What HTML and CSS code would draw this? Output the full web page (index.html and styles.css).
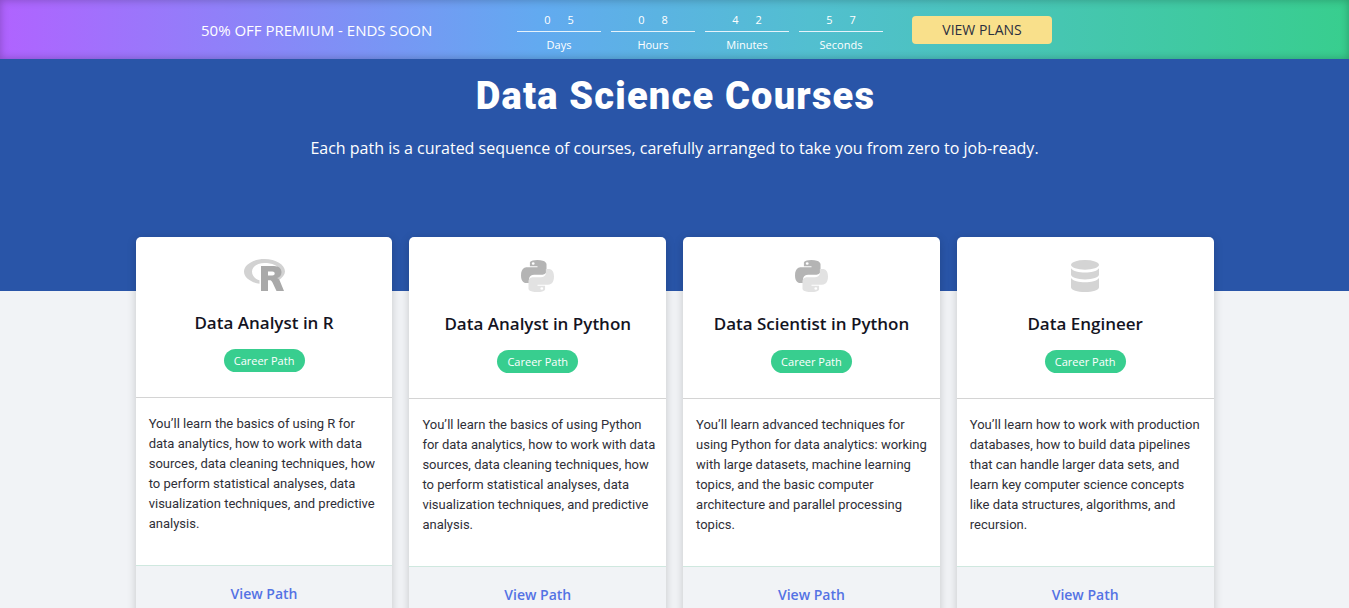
FILE: index.html
```html
<!DOCTYPE html>
<html>
<head>
  <title>Data Science Courses</title>
  <link rel="stylesheet" href="styles.css">
</head>
<body>
  <div class="promo">
    <p class="promo-text">50% OFF PREMIUM - ENDS SOON</p>
    <div class="countdown">
      <div class="unit"><div class="digits"><span>0</span><span>5</span></div><div class="label">Days</div></div>
      <div class="unit"><div class="digits"><span>0</span><span>8</span></div><div class="label">Hours</div></div>
      <div class="unit"><div class="digits"><span>4</span><span>2</span></div><div class="label">Minutes</div></div>
      <div class="unit"><div class="digits"><span>5</span><span>7</span></div><div class="label">Seconds</div></div>
    </div>
    <a class="plans-btn" href="#">VIEW PLANS</a>
  </div>

  <div class="hero">
    <h1>Data Science Courses</h1>
    <p>Each path is a curated sequence of courses, carefully arranged to take you from zero to job-ready.</p>
  </div>

  <div class="courses">
    <div class="card">
      <div class="card-top">
        <svg class="icon icon-r" viewBox="0 0 41 32">
          <path fill="#d2d2d2" fill-rule="evenodd" d="M20.500 0C9.200 0 0 5.600 0 12.600c0 6 6.600 10.900 15.500 12.200v-3.600c-4.500-1.200-7.500-4.400-7.500-8.600 0-4.900 5.500-8.600 12.500-8.600s15 2.400 15 8c0 2.400-1.100 4.300-3.200 5.800l2.200 3.800C38.500 18.600 41 15.800 41 12.600 41 5.600 31.800 0 20.500 0z"/>
          <path fill="#a9a9a9" fill-rule="evenodd" d="M17 7h13c5 0 7.500 2.800 7.500 6.300 0 2.900-1.700 4.900-4.300 5.700 1.200.6 1.900 1.500 2.600 2.700L40 32h-7.500l-4-8.600c-.8-1.500-1.600-2.100-3-2.100H24V32h-7V7zm7 5.500v4h4.300c1.500 0 2.400-.8 2.400-2s-.9-2-2.400-2H24z"/>
        </svg>
        <h2>Data Analyst in R</h2>
        <span class="badge">Career Path</span>
      </div>
      <p class="card-text">You’ll learn the basics of using R for data analytics, how to work with data sources, data cleaning techniques, how to perform statistical analyses, data visualization techniques, and predictive analysis.</p>
      <div class="card-foot"><a href="#">View Path</a></div>
    </div>

    <div class="card">
      <div class="card-top">
        <svg class="icon" viewBox="1 0 30 33" preserveAspectRatio="none">
          <path fill="#b4b4b4" fill-rule="evenodd" d="M15.900 0C8.600 0 9.100 3.200 9.100 3.200v3.300h6.900v1H6.400S1 6.900 1 15.900c0 8.100 4.600 7.800 4.600 7.800h2.800v-3.800s-.2-4.600 4.500-4.600h6.900s4.400.1 4.400-4.200V4.400S24.400 0 15.900 0zm-3.800 2.200a1.300 1.300 0 1 1 0 2.600 1.300 1.300 0 0 1 0-2.600z"/>
          <path fill="#e2e2e2" fill-rule="evenodd" d="M16.100 33c7.300 0 6.800-3.200 6.800-3.200v-3.300H16v-1h9.600s5.400.6 5.400-8.400c0-8.100-4.600-7.800-4.600-7.800h-2.800v3.800s.2 4.600-4.500 4.600h-6.900s-4.400-.1-4.400 4.200v7.700S7.600 33 16.100 33zm3.800-2.200a1.300 1.300 0 1 1 0-2.600 1.300 1.300 0 0 1 0 2.600z"/>
        </svg>
        <h2>Data Analyst in Python</h2>
        <span class="badge">Career Path</span>
      </div>
      <p class="card-text">You’ll learn the basics of using Python for data analytics, how to work with data sources, data cleaning techniques, how to perform statistical analyses, data visualization techniques, and predictive analysis.</p>
      <div class="card-foot"><a href="#">View Path</a></div>
    </div>

    <div class="card">
      <div class="card-top">
        <svg class="icon" viewBox="1 0 30 33" preserveAspectRatio="none">
          <path fill="#b4b4b4" fill-rule="evenodd" d="M15.900 0C8.600 0 9.100 3.200 9.100 3.200v3.300h6.900v1H6.400S1 6.900 1 15.900c0 8.100 4.600 7.800 4.600 7.800h2.800v-3.800s-.2-4.600 4.500-4.600h6.900s4.400.1 4.400-4.200V4.400S24.400 0 15.900 0zm-3.800 2.200a1.300 1.300 0 1 1 0 2.600 1.300 1.300 0 0 1 0-2.600z"/>
          <path fill="#e2e2e2" fill-rule="evenodd" d="M16.100 33c7.300 0 6.800-3.200 6.800-3.200v-3.300H16v-1h9.600s5.400.6 5.400-8.400c0-8.100-4.600-7.800-4.600-7.800h-2.800v3.800s.2 4.600-4.500 4.600h-6.900s-4.400-.1-4.400 4.200v7.700S7.600 33 16.100 33zm3.800-2.200a1.300 1.300 0 1 1 0-2.600 1.300 1.300 0 0 1 0 2.600z"/>
        </svg>
        <h2>Data Scientist in Python</h2>
        <span class="badge">Career Path</span>
      </div>
      <p class="card-text">You’ll learn advanced techniques for using Python for data analytics: working with large datasets, machine learning topics, and the basic computer architecture and parallel processing topics.</p>
      <div class="card-foot"><a href="#">View Path</a></div>
    </div>

    <div class="card">
      <div class="card-top">
        <svg class="icon icon-db" viewBox="2 0 28 33" preserveAspectRatio="none">
          <ellipse fill="#d4d4d4" cx="16" cy="5" rx="14" ry="5"/>
          <path fill="#d4d4d4" d="M2 8.500C4 11.500 10 13 16 13s12-1.500 14-4.500V15c0 2.800-6.300 5-14 5S2 17.800 2 15zM2 18.500C4 21.500 10 23 16 23s12-1.500 14-4.500V28c0 2.800-6.300 5-14 5S2 30.800 2 28z"/>
        </svg>
        <h2>Data Engineer</h2>
        <span class="badge">Career Path</span>
      </div>
      <p class="card-text">You’ll learn how to work with production databases, how to build data pipelines that can handle larger data sets, and learn key computer science concepts like data structures, algorithms, and recursion.</p>
      <div class="card-foot"><a href="#">View Path</a></div>
    </div>
  </div>
</body>
</html>
```

FILE: styles.css
```css
html, body {
  height: 608px;
  overflow: hidden;
}

* {
  box-sizing: border-box;
}

body {
  margin: 0;
  font-family: "Open Sans", sans-serif;
  background-color: #f1f3f6;
}

.promo {
  display: flex;
  align-items: center;
  height: 59px;
  padding-left: 201px;
  color: #ffffff;
  background: linear-gradient(90deg, #b063ff 0%, #62aaf0 40%, #52bfd0 60%, #38ce8e 100%);
  box-shadow: inset 0 0 8px rgba(0, 0, 0, 0.25);
}

.promo-text {
  width: 316px;
  margin: 0;
  font-size: 15px;
}

.countdown {
  display: flex;
  gap: 10px;
}

.unit {
  width: 84px;
  text-align: center;
}

.digits {
  display: flex;
  justify-content: center;
  gap: 17px;
  height: 25px;
  padding-top: 5px;
  font-size: 11px;
  line-height: 15px;
  border-bottom: 1px solid #e6f3fb;
}

.label {
  margin-top: 5px;
  font-size: 11px;
  line-height: 15px;
}

.plans-btn {
  display: block;
  width: 140px;
  height: 28px;
  margin-left: 29px;
  font-size: 14px;
  font-weight: 500;
  line-height: 28px;
  text-align: center;
  text-decoration: none;
  color: #2b2f3f;
  background-color: #f9e08b;
  border-radius: 4px;
}

.hero {
  height: 232px;
  text-align: center;
  color: #ffffff;
  background-color: #2955a8;
}

.hero h1 {
  margin: 0;
  padding: 14px 0 0 2px;
  font-family: "Roboto", sans-serif;
  font-size: 38px;
  font-weight: 900;
  line-height: 46px;
  letter-spacing: 1.2px;
}

.hero p {
  margin: 17px 0 0;
  font-size: 16px;
  line-height: 24px;
}

.courses {
  display: grid;
  grid-template-columns: repeat(4, 256.75px);
  gap: 16.95px;
  margin-top: -54px;
  padding-left: 135.7px;
}

.card {
  display: flex;
  flex-direction: column;
  height: 400px;
  background-color: #ffffff;
  border-radius: 5px 5px 0 0;
  box-shadow: 0 2px 10px rgba(0, 0, 0, 0.18);
}

.card-top {
  padding: 22px 0 25px;
  text-align: center;
  border-bottom: 1px solid #d4d4d4;
}

.icon {
  display: block;
  width: 33px;
  height: 32px;
  margin: 1px auto 0;
}

.icon-r {
  width: 41px;
  margin-top: 0;
}

.icon-db {
  width: 28px;
}

.card-top h2 {
  margin: 20px 0 0;
  font-size: 17px;
  font-weight: 600;
  line-height: 24px;
  color: #14141f;
}

.badge {
  display: block;
  width: 81px;
  margin: 14px auto 0;
  font-size: 11px;
  line-height: 23px;
  color: #ffffff;
  background-color: #38ce8f;
  border-radius: 12px;
}

.card-text {
  height: 167px;
  margin: 0;
  padding: 16px 10px 0 13px;
  font-family: "Roboto", sans-serif;
  font-size: 13px;
  line-height: 20px;
  color: #2f2f38;
}

.card-foot {
  flex: 1;
  padding-top: 16px;
  text-align: center;
  background-color: #f1f3f6;
  border-top: 1px solid #cfe8df;
}

.card-foot a {
  font-size: 14px;
  font-weight: 600;
  line-height: 19px;
  text-decoration: none;
  color: #5472e4;
}
```
